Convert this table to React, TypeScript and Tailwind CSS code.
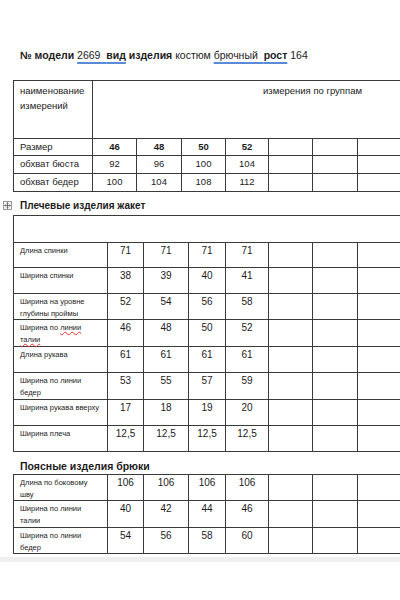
import React from "react";

const B = "border-[#3a3a3a]";

function T1Row({ label, vals, bold, h }: { label: string; vals: string[]; bold?: boolean; h: string }) {
  const widths = ["w-[44px]", "w-[45px]", "w-[44px]", "w-[43px]", "w-[44px]", "w-[45px]", "w-[44px]", "w-[44px]", "w-[44px]", "w-[43px]"];
  return (
    <div className={`flex ${h}`}>
      <div className={`w-[79px] shrink-0 border-r border-b ${B} flex items-center pl-[6px]`}>{label}</div>
      {widths.map((w, i) => (
        <div key={i} className={`${w} shrink-0 border-r border-b ${B} flex items-center justify-center ${bold ? "font-bold" : ""}`}>
          {vals[i] ?? ""}
        </div>
      ))}
    </div>
  );
}

const w2 = ["w-[36px]", "w-[45px]", "w-[37px]", "w-[43px]", "w-[44px]", "w-[45px]", "w-[44px]", "w-[44px]", "w-[44px]"];

function T2Row({ label, vals, h }: { label: React.ReactNode; vals: string[]; h: string }) {
  return (
    <div className={`flex ${h}`}>
      <div className={`w-[94px] shrink-0 border-r border-b ${B} pl-[6px] pt-[2px] text-[7.5px] leading-[12px]`}>{label}</div>
      {w2.map((w, i) => (
        <div key={i} className={`${w} shrink-0 border-r border-b ${B} flex justify-center pt-[1px] text-[10px] leading-[13px]`}>
          {vals[i] ?? ""}
        </div>
      ))}
    </div>
  );
}

export default function App() {
  const font = { fontFamily: '"Liberation Sans", Arial, sans-serif' };
  const wavy = "underline decoration-wavy decoration-[#e03030] decoration-[0.8px] underline-offset-[1px]";
  return (
    <div className="w-[400px] h-[600px] overflow-hidden bg-white text-[#1c1c1c] relative" style={font}>
      <div className="pt-[48px] pl-[20px] text-[10.5px] leading-[14px] whitespace-nowrap">
        <span className="font-bold">№ модели </span>
        <span className="underline decoration-[#5b8bd6] decoration-[1.5px] underline-offset-[3px]">
          2669 &nbsp;<span className="font-bold">вид</span>
        </span>
        <span className="font-bold"> изделия</span> костюм{" "}
        <span className="underline decoration-[#5b8bd6] decoration-[1.5px] underline-offset-[3px]">
          брючный &nbsp;<span className="font-bold">рост</span>
        </span>{" "}
        164
      </div>

      {/* Table 1 */}
      <div className={`ml-[13px] mt-[18px] w-[600px] border-l border-t ${B} text-[9.5px]`}>
        <div className="flex h-[58px]">
          <div className={`w-[79px] shrink-0 border-r border-b ${B} pl-[6px] pt-[2px] leading-[15px]`}>
            наименование
            <br />
            измерений
          </div>
          <div className={`w-[440px] shrink-0 border-r border-b ${B} text-center pt-[2px] leading-[15px]`}>
            измерения по группам
          </div>
        </div>
        <T1Row label="Размер" vals={["46", "48", "50", "52"]} bold h="h-[17px]" />
        <T1Row label="обхват бюста" vals={["92", "96", "100", "104"]} h="h-[18px]" />
        <T1Row label="обхват бедер" vals={["100", "104", "108", "112"]} h="h-[18px]" />
      </div>

      {/* Section 2 */}
      <div className="relative mt-[6px] h-[15px] flex items-center">
        <div className="absolute left-[3px] top-[3px] w-[9px] h-[9px] border border-[#9a9a9a] bg-[#f4f4f4] flex items-center justify-center">
          <svg width="7" height="7" viewBox="0 0 7 7">
            <path d="M3.5 0.5V6.5M0.5 3.5H6.5" stroke="#555" strokeWidth="0.8" />
            <path d="M2.5 1.5L3.5 0.5L4.5 1.5M2.5 5.5L3.5 6.5L4.5 5.5M1.5 2.5L0.5 3.5L1.5 4.5M5.5 2.5L6.5 3.5L5.5 4.5" stroke="#555" strokeWidth="0.6" fill="none" />
          </svg>
        </div>
        <span className="pl-[20px] font-bold text-[10px]">Плечевые изделия жакет</span>
      </div>
      <div className={`ml-[13px] mt-[2px] w-[600px] border-l border-t ${B}`}>
        <div className={`h-[27px] w-[575px] border-r border-b ${B}`} />
        <T2Row label="Длина спинки" vals={["71", "71", "71", "71"]} h="h-[25px]" />
        <T2Row label="Ширина спинки" vals={["38", "39", "40", "41"]} h="h-[26px]" />
        <T2Row label={<>Ширина на уровне<br />глубины проймы</>} vals={["52", "54", "56", "58"]} h="h-[26px]" />
        <T2Row
          label={
            <>
              Ширина по <span className={wavy}>линии</span>
              <br />
              <span className={wavy}>талии</span>
            </>
          }
          vals={["46", "48", "50", "52"]}
          h="h-[27px]"
        />
        <T2Row label="Длина рукава" vals={["61", "61", "61", "61"]} h="h-[26px]" />
        <T2Row label={<>Ширина по линии<br />бедер</>} vals={["53", "55", "57", "59"]} h="h-[27px]" />
        <T2Row label="Ширина рукава вверху" vals={["17", "18", "19", "20"]} h="h-[26px]" />
        <T2Row label="Ширина плеча" vals={["12,5", "12,5", "12,5", "12,5"]} h="h-[26px]" />
      </div>

      {/* Section 3 */}
      <div className="mt-[7px] h-[15px] flex items-center pl-[20px] font-bold text-[10.5px]">Поясные изделия брюки</div>
      <div className={`ml-[13px] w-[600px] border-l border-t ${B}`}>
        <T2Row label={<>Длина по боковому<br />шву</>} vals={["106", "106", "106", "106"]} h="h-[26px]" />
        <T2Row label={<>Ширина по линии<br />талии</>} vals={["40", "42", "44", "46"]} h="h-[27px]" />
        <T2Row label={<>Ширина по линии<br />бедер</>} vals={["54", "56", "58", "60"]} h="h-[26px]" />
      </div>
      <div className="mt-[3px] h-[5px] bg-[#efefef]" />
    </div>
  );
}
